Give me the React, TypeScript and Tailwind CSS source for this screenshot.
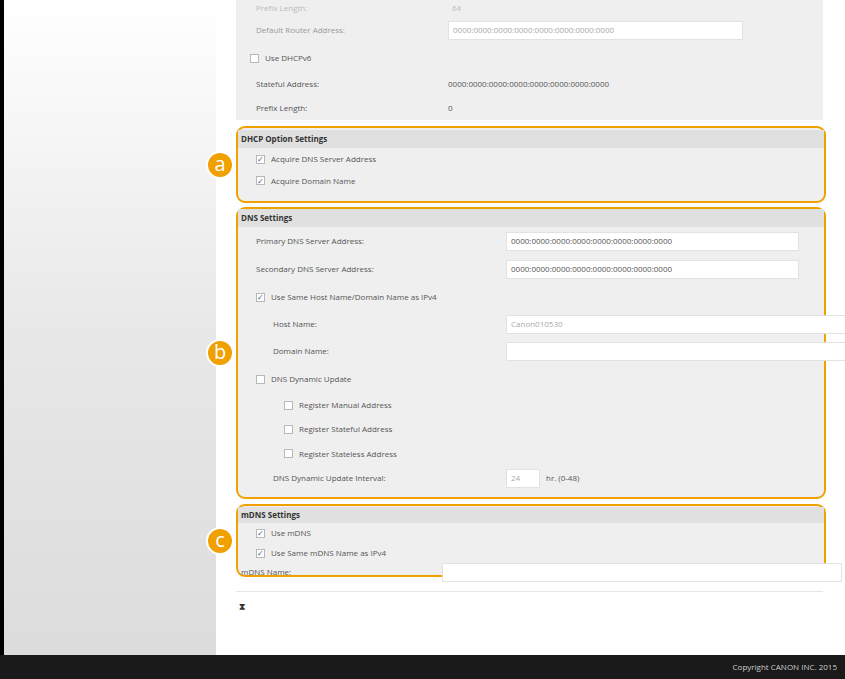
import React from "react";

const F = { fontFamily: '"Open Sans", "Liberation Sans", sans-serif' };

function Cb({ checked }: { checked?: boolean }) {
  return (
    <span className="inline-flex items-center justify-center w-[9px] h-[9px] border border-[#b8b8b8] bg-white mr-[6px] text-[8px] leading-none text-[#4a5a9a]">
      {checked ? "✓" : ""}
    </span>
  );
}

function Badge({ l }: { l: string }) {
  return (
    <div className="absolute left-[-32px] top-1/2 -translate-y-1/2 w-[28px] h-[28px] rounded-full bg-[#f0a000] border-2 border-white text-white text-[20px] flex items-center justify-center leading-none pb-[2px]" style={F}>
      {l}
    </div>
  );
}

function Row({ h, children, cls = "" }: { h: number; children: React.ReactNode; cls?: string }) {
  return <div className={`flex items-center whitespace-nowrap ${cls}`} style={{ height: h }}>{children}</div>;
}

function Input({ w, v, ml, gray }: { w: number; v?: string; ml?: number; gray?: boolean }) {
  return (
    <div className={`h-[19px] bg-white border border-[#e2e2e2] flex items-center px-[4px] shrink-0 ${gray ? "text-[#aaa]" : "text-[#555]"}`} style={{ width: w, marginLeft: ml }}>
      {v}
    </div>
  );
}

export default function App() {
  const addr = "0000:0000:0000:0000:0000:0000:0000:0000";
  return (
    <div className="w-[845px] h-[679px] bg-black flex flex-col overflow-hidden text-[8px] text-[#555]" style={F}>
      <div className="flex flex-1 min-h-0 pl-[4px]">
        <div className="w-[212px] shrink-0 bg-gradient-to-b from-white via-[#e8e8e8] to-[#dcdcdc]" />
        <div className="flex-1 bg-white pl-[20px] pr-[20px] relative">
          <div className="bg-[#efefef] w-[587px] h-[120px] pl-[20px] flex flex-col">
            <Row h={16}><span className="w-[196px] text-[#bbb]">Prefix Length:</span><span className="text-[#bbb]">64</span></Row>
            <Row h={28}><span className="w-[192px] text-[#999]">Default Router Address:</span><Input w={295} v={addr} gray /></Row>
            <Row h={28} cls="-ml-[6px]"><Cb />Use DHCPv6</Row>
            <Row h={24}><span className="w-[192px]">Stateful Address:</span>{addr}</Row>
            <Row h={24}><span className="w-[192px]">Prefix Length:</span>0</Row>
          </div>

          <div className="relative mt-[6px] w-[590px] h-[77px] border-[2.5px] border-[#f0a000] rounded-[9px] bg-[#efefef]">
            <Badge l="a" />
            <div className="h-[18px] mt-[2px] bg-[#e0e0e0] font-bold text-[#333] flex items-center pl-[3px]">DHCP Option Settings</div>
            <div className="pl-[18px]">
              <Row h={22}><Cb checked />Acquire DNS Server Address</Row>
              <Row h={21}><Cb checked />Acquire Domain Name</Row>
            </div>
          </div>

          <div className="relative mt-[4px] w-[590px] h-[292px] border-[2.5px] border-[#f0a000] rounded-[9px] bg-[#efefef]">
            <Badge l="b" />
            <div className="h-[18px] bg-[#e0e0e0] font-bold text-[#333] flex items-center pl-[3px]">DNS Settings</div>
            <div className="pl-[18px]">
              <Row h={28}><span className="w-[250px]">Primary DNS Server Address:</span><Input w={293} v={addr} /></Row>
              <Row h={28}><span className="w-[250px]">Secondary DNS Server Address:</span><Input w={293} v={addr} /></Row>
              <Row h={28}><Cb checked />Use Same Host Name/Domain Name as IPv4</Row>
              <Row h={26}><span className="w-[250px] pl-[17px] shrink-0">Host Name:</span><Input w={340} v="Canon010530" gray /></Row>
              <Row h={28}><span className="w-[250px] pl-[17px] shrink-0">Domain Name:</span><Input w={340} /></Row>
              <Row h={28}><Cb />DNS Dynamic Update</Row>
              <div className="pl-[28px]">
                <Row h={24}><Cb />Register Manual Address</Row>
                <Row h={24}><Cb />Register Stateful Address</Row>
                <Row h={25}><Cb />Register Stateless Address</Row>
              </div>
              <Row h={24}><span className="w-[250px] pl-[17px]">DNS Dynamic Update Interval:</span><Input w={34} v="24" gray /><span className="ml-[6px]">hr. (0-48)</span></Row>
            </div>
          </div>

          <div className="relative mt-[5px] w-[590px] h-[73px] border-[2.5px] border-[#f0a000] rounded-[9px] bg-[#efefef]">
            <Badge l="c" />
            <div className="h-[16px] mt-[1px] bg-[#e0e0e0] font-bold text-[#333] flex items-center pl-[3px]">mDNS Settings</div>
            <div className="pl-[18px]">
              <Row h={20}><Cb checked />Use mDNS</Row>
              <Row h={20}><Cb checked />Use Same mDNS Name as IPv4</Row>
            </div>
            <Row h={18} cls="pl-[3px]"><span className="w-[201px] shrink-0">mDNS Name:</span><Input w={400} /></Row>
          </div>

          <div className="w-[587px] border-t border-[#e6e6e6] mt-[14px]" />
          <div className="mt-[8px] ml-[3px] text-[9px] text-[#333] font-bold">⧗</div>
        </div>
      </div>
      <div className="h-[24px] shrink-0 bg-[#1a1a1a] flex items-center justify-end pr-[8px] text-[#ccc] text-[8px]">Copyright CANON INC. 2015</div>
    </div>
  );
}
